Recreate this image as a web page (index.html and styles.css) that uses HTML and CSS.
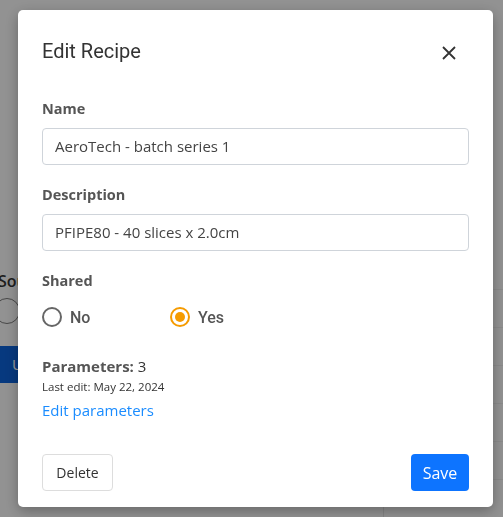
FILE: index.html
```html
<!DOCTYPE html>
<html>
<head>
<meta charset="utf-8">
<link rel="stylesheet" href="styles.css">
</head>
<body>
<div class="page">
  <div class="side">
    <div class="side-title">Sources</div>
    <div class="toggle"></div>
    <div class="side-btn">Upload</div>
  </div>
  <div class="main"></div>
  <div class="table">
    <div class="row">Version</div>
    <div class="row">Data</div>
    <div class="row"></div>
    <div class="row">Network 1 SS</div>
    <div class="row">Network 2 SS</div>
    <div class="row">Network 4 SS</div>
    <div class="row">Network 3 SS</div>
  </div>
</div>
<div class="overlay"></div>
<div class="modal">
  <div class="modal-head">
    <h1 class="modal-title">Edit Recipe</h1>
    <button class="close" aria-label="Close">
      <svg width="14" height="14" viewBox="0 0 14 14"><path d="M1 1L13 13M13 1L1 13" stroke="#333" stroke-width="1.8" fill="none"/></svg>
    </button>
  </div>
  <div class="field">
    <label class="label">Name</label>
    <div class="input">AeroTech - batch series 1</div>
  </div>
  <div class="field">
    <label class="label">Description</label>
    <div class="input">PFIPE80 - 40 slices x 2.0cm</div>
  </div>
  <div class="field">
    <label class="label">Shared</label>
    <div class="radios">
      <div class="radio"><span class="dot"></span><span class="rlabel">No</span></div>
      <div class="radio checked"><span class="dot"></span><span class="rlabel">Yes</span></div>
    </div>
  </div>
  <div class="params">
    <div class="pline"><b>Parameters:</b> 3</div>
    <div class="last">Last edit: May 22, 2024</div>
    <a class="link">Edit parameters</a>
  </div>
  <div class="footer">
    <button class="btn btn-delete">Delete</button>
    <button class="btn btn-save">Save</button>
  </div>
</div>
</body>
</html>
```
FILE: styles.css
```css
* { box-sizing: border-box; }
html, body { margin: 0; height: 100%; }
body {
  font-family: "Open Sans", "Noto Sans", sans-serif;
  background: #f4f4f4;
  overflow: hidden;
}
.page {
  display: grid;
  grid-template-columns: 60px 1fr 140px;
  height: 517px;
  padding-top: 270px;
}
.side { padding-left: 0; color: #333; }
.side-title { font-size: 16px; font-weight: 600; margin-left: -2px; }
.toggle { width: 26px; height: 26px; border: 1px solid #777; border-radius: 50%; margin: 6px 0 0 -6px; }
.side-btn {
  margin-top: 22px; height: 37px; background: #0b5fd4; color: #fff; padding: 8px 12px; border-radius: 0 4px 4px 0; font-size: 15px;
}
.table { border-left: 1px solid #ddd; margin-left: 20px; }
.row {
  height: 38px; border-bottom: 1px solid #e7e7e7; padding: 6px 0 0 0; font-size: 16px; color: #333;
  white-space: nowrap; overflow: hidden;
}
.row:first-child { height: 20px; }
.overlay {
  position: fixed; inset: 0; background: rgba(0,0,0,0.4);
}
.modal {
  position: fixed; left: 18px; top: 10px; width: 475px; height: 497px;
  background: #fff; border-radius: 5px;
  box-shadow: 0 4px 14px rgba(0,0,0,0.3);
  padding: 24px 24px 16px;
  display: flex; flex-direction: column;
}
.modal-head { display: flex; justify-content: space-between; align-items: center; height: 34px; }
.modal-title { margin: 0; font-family: Roboto, sans-serif; font-weight: 400; font-size: 20px; color: #333; }
.close { border: 0; background: none; padding: 0; width: 16px; height: 16px; margin: 5px 11px 0 0; display: flex; }
.field { margin-top: 31px; }
.field + .field { margin-top: 20px; }
.label { display: block; font-weight: 700; font-size: 14.5px; color: #555; line-height: 20px; }
.input {
  margin-top: 9px; height: 37px; border: 1px solid #cfd4da; border-radius: 4px;
  padding: 0 12px; font-size: 15px; color: #444; line-height: 35px;
}
.radios { display: flex; margin-top: 16px; gap: 0; }
.radio { display: flex; align-items: center; width: 128px; }
.dot { width: 20px; height: 20px; border: 2px solid #666; border-radius: 50%; position: relative; }
.radio.checked .dot { border-color: #f59b00; }
.radio.checked .dot::after {
  content: ""; position: absolute; left: 3px; top: 3px; width: 10px; height: 10px; border-radius: 50%; background: #f59b00;
}
.rlabel { font-family: Roboto, sans-serif; font-weight: 500; font-size: 16px; color: #555; margin-left: 8px; }
.params { margin-top: 29px; color: #333; }
.pline { font-size: 15px; }
.pline b { font-weight: 700; color: #555; }
.last { font-size: 11.5px; margin-top: 3px; color: #333; }
.link { display: block; color: #1a8cff; font-size: 15px; margin-top: 6px; }
.footer { margin-top: auto; display: flex; justify-content: space-between; align-items: flex-end; }
.btn { font-family: "Open Sans", sans-serif; border-radius: 4px; height: 37px; }
.btn-delete { background: #fff; border: 1px solid #ddd; color: #333; font-size: 14px; width: 71px; }
.btn-save { background: #0d74ff; border: 0; color: #fff; font-size: 16px; width: 58px; }
```
